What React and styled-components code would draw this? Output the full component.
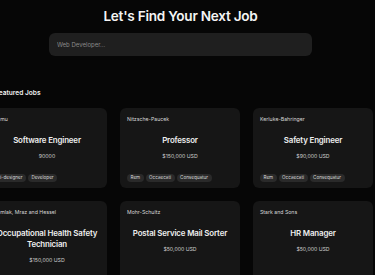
import React from "react";
import styled, { createGlobalStyle } from "styled-components";

const Global = createGlobalStyle`
  html, body { margin: 0; padding: 0; background: #060606; overflow: hidden; }
  body { font-family: "Inter", "Noto Sans", sans-serif; color: #f2f2f2; }
  * { box-sizing: border-box; }
`;

const Page = styled.div`
  width: 387px;
  margin-left: -13px;
  padding-top: 6px;
  display: flex;
  flex-direction: column;
  align-items: center;
`;

const Title = styled.h1`
  margin: 0;
  font-size: 13.6px;
  font-weight: 600;
  line-height: 20px;
  color: #f4f4f4;
  letter-spacing: -0.25px;
`;

const Search = styled.input`
  margin-top: 7px;
  width: 263px;
  height: 23px;
  border: none;
  outline: none;
  border-radius: 6px;
  background: #1f1f1f;
  color: #ddd;
  padding: 0 8px;
  font-family: inherit;
  font-size: 6px;
  &::placeholder { color: #8a8a8a; }
`;

const Section = styled.section`
  align-self: stretch;
  margin-top: 32px;
`;

const SectionTitle = styled.h2`
  margin: 0 0 10px 8px;
  font-size: 6.6px;
  font-weight: 600;
  line-height: 10px;
  color: #f0f0f0;
`;

const Grid = styled.div`
  display: grid;
  grid-template-columns: repeat(3, 120px);
  column-gap: 13px;
  row-gap: 13px;
`;

const Card = styled.div`
  background: #161616;
  border-radius: 6px;
  padding: 7px 7px 6px;
  height: 80px;
  display: flex;
  flex-direction: column;
  &:nth-child(n + 4) { height: 95px; }
`;

const Company = styled.div`
  font-size: 5.2px;
  line-height: 8px;
  color: #d6d6d6;
  white-space: nowrap;
`;

const JobTitle = styled.div`
  margin-top: 11.5px;
  text-align: center;
  font-size: 7.9px;
  font-weight: 600;
  line-height: 11px;
  letter-spacing: -0.15px;
  color: #efefef;
`;

const Salary = styled.div`
  margin-top: 6.5px;
  text-align: center;
  font-size: 5.2px;
  line-height: 8px;
  color: #d0d0d0;
`;

const Tags = styled.div`
  margin-top: auto;
  display: flex;
  gap: 2px;
`;

const Tag = styled.span`
  background: #2a2a2a;
  border-radius: 4px;
  padding: 0 3.5px;
  height: 8px;
  line-height: 8px;
  font-size: 4.6px;
  color: #d8d8d8;
  white-space: nowrap;
`;

const jobs = [
  { company: "Ramu", title: "Software Engineer", salary: "90000", tags: ["ui-designer", "Developer"] },
  { company: "Nitzsche-Paucek", title: "Professor", salary: "$150,000 USD", tags: ["Rem", "Occaecati", "Consequatur"] },
  { company: "Kerluke-Bahringer", title: "Safety Engineer", salary: "$90,000 USD", tags: ["Rem", "Occaecati", "Consequatur"] },
  { company: "Zemlak, Mraz and Hessel", title: "Occupational Health Safety Technician", salary: "$150,000 USD", tags: [] },
  { company: "Mohr-Schultz", title: "Postal Service Mail Sorter", salary: "$50,000 USD", tags: [] },
  { company: "Stark and Sons", title: "HR Manager", salary: "$50,000 USD", tags: [] },
];

export default function App() {
  return (
    <>
      <Global />
      <Page>
        <Title>Let's Find Your Next Job</Title>
        <Search placeholder="Web Developer..." />
        <Section>
          <SectionTitle>Featured Jobs</SectionTitle>
          <Grid>
            {jobs.map((j, i) => (
              <Card key={i}>
                <Company>{j.company}</Company>
                <JobTitle>{j.title}</JobTitle>
                <Salary>{j.salary}</Salary>
                {j.tags.length > 0 && (
                  <Tags>
                    {j.tags.map((t) => (
                      <Tag key={t}>{t}</Tag>
                    ))}
                  </Tags>
                )}
              </Card>
            ))}
          </Grid>
        </Section>
      </Page>
    </>
  );
}
